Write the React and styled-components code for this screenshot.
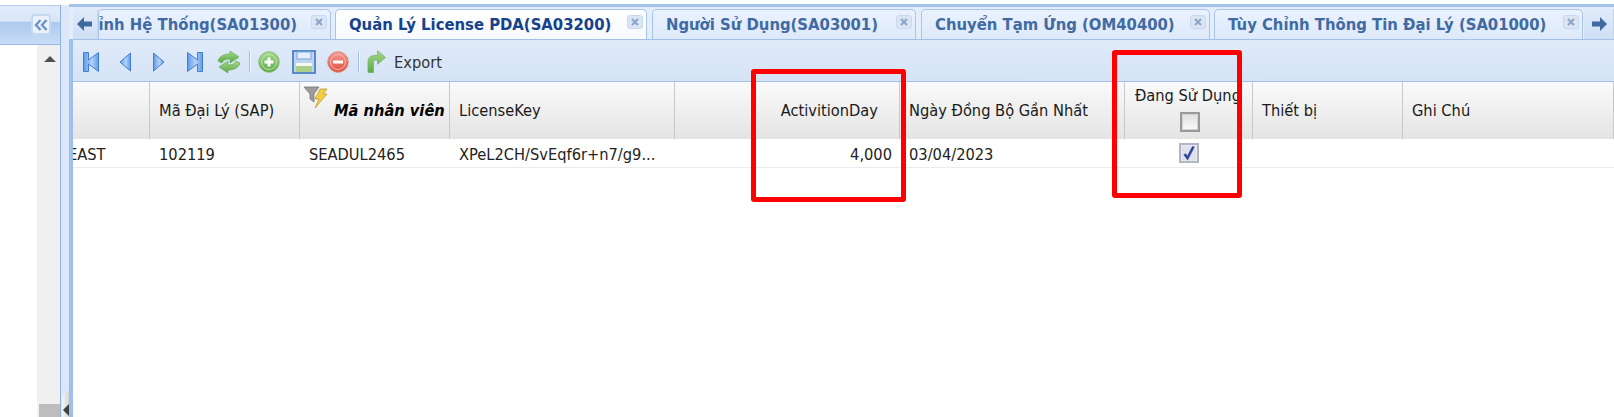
import React from "react";
import styled, { createGlobalStyle } from "styled-components";

const GlobalStyle = createGlobalStyle`
  html, body {
    margin: 0;
    padding: 0;
    background: #fff;
  }
  body {
    font-family: "DejaVu Sans Condensed", "DejaVu Sans", sans-serif;
    overflow: hidden;
  }
`;

const Page = styled.div`
  position: relative;
  display: flex;
  width: 1614px;
  height: 417px;
  overflow: hidden;
  background: #fff;
`;

const LeftPanel = styled.div`
  display: flex;
  flex-direction: column;
  width: 60px;
  padding-top: 5px;
`;

const LeftHeader = styled.div`
  display: flex;
  justify-content: flex-end;
  align-items: flex-start;
  height: 40px;
  padding: 8px 9px 0 0;
  box-sizing: border-box;
  background: linear-gradient(#e1ebfa, #d9e6f8 40%, #adc9ef 43%, #c9dcf5);
  border-top: 1px solid #b4cdee;
  border-bottom: 1px solid #99bbe8;
`;

const CollapseButton = styled.div`
  display: flex;
  align-items: center;
  justify-content: center;
  width: 20px;
  height: 21px;
  box-sizing: border-box;
  border: 2px solid #c6d9f3;
  border-radius: 4px;
  background: #eaf3fd;
  color: #6b93c9;
`;

const LeftBody = styled.div`
  flex: 1;
  display: flex;
  justify-content: flex-end;
`;

const ScrollTrack = styled.div`
  display: flex;
  flex-direction: column;
  justify-content: space-between;
  align-items: center;
  width: 23px;
  background: #f0f0f0;
  padding-top: 11px;
`;

const ScrollUp = styled.div`
  width: 0;
  height: 0;
  margin-left: 2px;
  border-left: 6px solid transparent;
  border-right: 6px solid transparent;
  border-bottom: 6px solid #505050;
`;

const ScrollThumb = styled.div`
  align-self: flex-end;
  width: 21px;
  height: 13px;
  background: #bdbdbd;
`;

const Splitter = styled.div`
  position: relative;
  width: 9px;
  margin-top: 5px;
  background: #dce8fa;
  border-left: 1px solid #8fb2e4;
  box-sizing: border-box;
`;

const SplitterGrip = styled.div`
  position: absolute;
  left: 1px;
  bottom: 0;
  width: 7px;
  height: 26px;
  background: linear-gradient(90deg, #f4f4f4, #d6d6d6);
  clip-path: polygon(0 5px, 100% 0, 100% 100%, 0 100%);
`;

const SplitterArrow = styled.div`
  position: absolute;
  right: 0;
  bottom: 1px;
  width: 0;
  height: 0;
  border-top: 6px solid transparent;
  border-bottom: 6px solid transparent;
  border-right: 6px solid #404040;
`;

const MainPanel = styled.div`
  flex: 1;
  min-width: 0;
  display: flex;
  flex-direction: column;
  margin-top: 4px;
  background: #fff;
  border-left: 4px solid #9dbfeb;
`;

const TabBar = styled.div`
  display: flex;
  align-items: flex-end;
  height: 36px;
  border-top: 3px solid #a4c3ea;
  margin-left: -4px;
  padding-left: 4px;
  box-sizing: border-box;
  background: #e4eefb;
  border-bottom: 1px solid #a3c0e8;
`;

const TabScroller = styled.div`
  flex: none;
  display: flex;
  align-items: center;
  justify-content: center;
  align-self: stretch;
  width: ${(p) => p.$w}px;
  margin-top: 2px;
  background: linear-gradient(#e0ebfa, #cfdff5);
  border-right: 1px solid #c3d6f1;
  color: #3f6a9f;
  box-sizing: border-box;
`;

const TabItem = styled.div`
  flex: none;
  position: relative;
  display: flex;
  justify-content: ${(p) => (p.$clip ? "flex-end" : "flex-start")};
  align-items: center;
  width: ${(p) => p.$w}px;
  height: 30px;
  margin-right: ${(p) => p.$gap}px;
  padding: 0 ${(p) => (p.$clip ? 33 : 0)}px 0 ${(p) => (p.$clip ? 0 : p.$pad)}px;
  box-sizing: border-box;
  overflow: hidden;
  white-space: nowrap;
  font-size: 16.5px;
  font-weight: 700;
  color: ${(p) => (p.$active ? "#15428b" : "#416aa3")};
  background: ${(p) => (p.$active ? "linear-gradient(#fff, #f6f9fe)" : "linear-gradient(#eaf2fd, #dde9fa)")};
  border: 1px solid #a9c4ea;
  border-bottom: none;
  border-radius: 5px 5px 0 0;
`;

const TabClose = styled.div`
  position: absolute;
  top: 5px;
  right: 3px;
  display: flex;
  align-items: center;
  justify-content: center;
  width: 16px;
  height: 14px;
  border-radius: 3px;
  background: #dbe6f5;
  border: 1px solid #c8d8ee;
  box-sizing: border-box;
  color: #8ea6c7;
`;

const Toolbar = styled.div`
  display: flex;
  align-items: center;
  height: 42px;
  padding: 2px 0 0 10px;
  background: linear-gradient(#e0ebfa, #d5e3f5);
  border-bottom: 1px solid #a3c0e8;
  box-sizing: border-box;
`;

const ToolIcon = styled.div`
  flex: none;
  display: flex;
  align-items: center;
  justify-content: center;
  width: ${(p) => p.$w}px;
  height: 26px;
  margin-right: ${(p) => p.$mr}px;
`;

const ToolSep = styled.div`
  flex: none;
  width: 1px;
  height: 21px;
  margin-right: ${(p) => p.$mr}px;
  background: #f2f8ff;
  border-left: 1px solid #9fc0ea;
`;

const ExportLabel = styled.span`
  font-size: 16.3px;
  margin-top: 2px;
  color: #333;
`;

const Grid = styled.div`
  display: grid;
  grid-template-columns: 77px 150px 150px 225px 225px 225px 128px 150px 211px;
`;

const HeadCell = styled.div`
  position: relative;
  display: flex;
  align-items: center;
  justify-content: ${(p) => (p.$right ? "flex-end" : "flex-start")};
  height: 57px;
  padding: ${(p) => (p.$right ? "0 21px 0 0" : `0 0 0 ${p.$pad ?? 9}px`)};
  box-sizing: border-box;
  overflow: hidden;
  white-space: nowrap;
  font-size: 16.3px;
  font-weight: ${(p) => (p.$sorted ? 700 : 400)};
  font-style: ${(p) => (p.$sorted ? "italic" : "normal")};
  color: ${(p) => (p.$sorted ? "#000" : "#1a1a1a")};
  background: linear-gradient(#fafafa, #e4e4e4);
  border-right: 1px solid #c8c8c8;
`;

const StackedHeadCell = styled(HeadCell)`
  flex-direction: column;
  align-items: flex-start;
  justify-content: flex-start;
  padding: 5px 0 0 10px;
`;

const HeadLabel = styled.span`
  line-height: 18px;
`;

const DataCell = styled.div`
  display: flex;
  align-items: center;
  justify-content: ${(p) => (p.$right ? "flex-end" : p.$center ? "center" : "flex-start")};
  height: 29px;
  padding: ${(p) => (p.$right ? "2px 8px 0 0" : `${p.$center ? 0 : 2}px 0 0 ${p.$pad ?? 9}px`)};
  box-sizing: border-box;
  overflow: hidden;
  white-space: nowrap;
  font-size: 16.3px;
  color: #222;
  border-bottom: 1px solid #ececec;
`;

const ClippedText = styled.span`
  margin-left: -5px;
`;

const CheckBox = styled.div`
  flex: none;
  display: flex;
  align-items: center;
  justify-content: center;
  width: 20px;
  height: 20px;
  margin-top: ${(p) => p.$top || 0}px;
  margin-left: ${(p) => p.$left || 0}px;
  box-sizing: border-box;
  border: 2px solid ${(p) => (p.$checked ? "#b1b6c2" : "#999")};
  background: ${(p) => (p.$checked ? "#dde2ec" : "linear-gradient(#dedede, #fafafa)")};
  box-shadow: inset 0 0 0 1px ${(p) => (p.$checked ? "#e8ebf2" : "#d2d2d2")};
`;

const RedBox = styled.div`
  position: absolute;
  left: ${(p) => p.$x}px;
  top: ${(p) => p.$y}px;
  width: ${(p) => p.$w}px;
  height: ${(p) => p.$h}px;
  box-sizing: border-box;
  border: 5px solid #fe0000;
  border-radius: 3px;
`;

const FilterIcon = styled.svg`
  position: absolute;
  left: 3px;
  top: 4px;
`;

const ChevronsLeft = () => (
  <svg width="14" height="12" viewBox="0 0 14 12" fill="none" stroke="currentColor" strokeWidth="2.4">
    <path d="M6.500 1 2 6l4.500 5M12.500 1 8 6l4.500 5" />
  </svg>
);

const ArrowIcon = ({ right }) => (
  <svg width="16" height="14" viewBox="0 0 16 14" fill="currentColor">
    <path d={right ? "M9 0l7 7-7 7V9.500H1v-5h8z" : "M7 0 0 7l7 7V9.500h8v-5H7z"} />
  </svg>
);

const CloseGlyph = () => (
  <svg width="8" height="8" viewBox="0 0 8 8" stroke="currentColor" strokeWidth="2.200">
    <path d="M1 1l6 6M7 1 1 7" />
  </svg>
);

const Defs = () => (
  <svg width="0" height="0" style={{ position: "absolute" }}>
    <defs>
      <linearGradient id="navBlue" x1="0" y1="0" x2="1" y2="0">
        <stop offset="0" stopColor="#5f9ae6" />
        <stop offset="0.55" stopColor="#b4d3f7" />
        <stop offset="1" stopColor="#5f9ae6" />
      </linearGradient>
      <linearGradient id="green" x1="0" y1="0" x2="0" y2="1">
        <stop offset="0" stopColor="#a8d88a" />
        <stop offset="1" stopColor="#5aa748" />
      </linearGradient>
      <linearGradient id="red" x1="0" y1="0" x2="0" y2="1">
        <stop offset="0" stopColor="#f59a90" />
        <stop offset="1" stopColor="#dc4f42" />
      </linearGradient>
    </defs>
  </svg>
);

const NavIcon = ({ kind }) => {
  const shapes = {
    first: { w: 16, d: "M.5 .5h5v7.500L15.500 .5v19L5.500 12v7.500h-5z" },
    prev: { w: 12, d: "M11.500 1v18L1 10z" },
    next: { w: 12, d: "M.5 1v18L11 10z" },
    last: { w: 16, d: "M15.500 .5h-5v7.500L.5 .5v19l10-7.500v7.500h5z" },
  };
  const s = shapes[kind];
  return (
    <svg width={s.w} height="20" viewBox={`0 0 ${s.w} 20`}>
      <path d={s.d} fill="url(#navBlue)" stroke="#3f7ed4" strokeWidth="1" />
    </svg>
  );
};

const RefreshIcon = () => (
  <svg width="24" height="22" viewBox="0 0 24 22">
    <path d="M1 10C2.500 5 7 3 13 3V0l9 6-9 6V8C9 8 6 9 5 12z" fill="url(#green)" stroke="#64ad52" strokeWidth="0.7" />
    <path d="M23 12c-1.500 5-6 7-12 7v3l-9-6 9-6v4c4 0 7-1 8-4z" fill="url(#green)" stroke="#64ad52" strokeWidth="0.7" />
  </svg>
);

const AddIcon = () => (
  <svg width="22" height="22" viewBox="0 0 22 22">
    <circle cx="11" cy="11" r="10.300" fill="url(#green)" stroke="#8cc079" />
    <circle cx="11" cy="11" r="7.500" fill="none" stroke="#c4e6b2" strokeWidth="1" />
    <path d="M11 6.500v9M6.500 11h9" stroke="#fff" strokeWidth="3" />
  </svg>
);

const SaveIcon = () => (
  <svg width="24" height="24" viewBox="0 0 24 24">
    <rect x="1" y="1" width="22" height="22" fill="#bcd3f1" stroke="#3f74bd" strokeWidth="1.600" />
    <rect x="5" y="2" width="14" height="7" fill="#e4eefb" stroke="#7fa5d9" />
    <rect x="4" y="13" width="16" height="9" fill="#f4f8ee" />
    <rect x="4" y="16" width="16" height="6" fill="#a9cf8b" />
  </svg>
);

const RemoveIcon = () => (
  <svg width="22" height="22" viewBox="0 0 22 22">
    <circle cx="11" cy="11" r="10.300" fill="url(#red)" stroke="#e08a80" />
    <circle cx="11" cy="11" r="7.500" fill="none" stroke="#fbb9b2" strokeWidth="1" />
    <path d="M6 11h10" stroke="#fff" strokeWidth="3" />
  </svg>
);

const ExportIcon = () => (
  <svg width="19" height="23" viewBox="0 0 19 23">
    <path d="M1 22.500V12C1 7.500 4 5.500 8 5.500h2.500V.8L18.500 7.500l-8 6.700V10H9c-2 0-2.500 1-2.500 3v9.500z" fill="url(#green)" stroke="#74b65e" strokeWidth="0.8" />
  </svg>
);

const FilterBolt = () => (
  <FilterIcon width="26" height="26" viewBox="0 0 26 26">
    <path d="M1 1h15l-5 7v8l-4-3V8z" fill="#9c9c9c" stroke="#6f6f6f" strokeWidth="0.7" />
    <path d="M17 3h7l-4 5h4L12 22l4-9h-4z" fill="#f2cd45" stroke="#b79320" strokeWidth="0.7" />
  </FilterIcon>
);

const CheckMark = () => (
  <svg width="14" height="16" viewBox="0 0 14 16" fill="none" stroke="#33489c" strokeWidth="2.600">
    <path d="M2.500 9l3 4L11.500 1.500" />
  </svg>
);

const tabs = [
  { id: "sys", label: "Tùy Chỉnh Hệ Thống(SA01300)", w: 233, gap: 4, clip: true },
  { id: "pda", label: "Quản Lý License PDA(SA03200)", w: 312, gap: 5, pad: 13, active: true },
  { id: "usr", label: "Người Sử Dụng(SA03001)", w: 264, gap: 5, pad: 13 },
  { id: "om", label: "Chuyển Tạm Ứng (OM40400)", w: 289, gap: 4, pad: 13 },
  { id: "agt", label: "Tùy Chỉnh Thông Tin Đại Lý (SA01000)", w: 369, gap: 1, pad: 13 },
];

export default function App() {
  return (
    <Page>
      <GlobalStyle />
      <Defs />
      <LeftPanel>
        <LeftHeader>
          <CollapseButton>
            <ChevronsLeft />
          </CollapseButton>
        </LeftHeader>
        <LeftBody>
          <ScrollTrack>
            <ScrollUp />
            <ScrollThumb />
          </ScrollTrack>
        </LeftBody>
      </LeftPanel>
      <Splitter>
        <SplitterGrip />
        <SplitterArrow />
      </Splitter>
      <MainPanel>
        <TabBar>
          <TabScroller $w={25}>
            <ArrowIcon />
          </TabScroller>
          {tabs.map((t) => (
            <TabItem key={t.id} $w={t.w} $gap={t.gap} $pad={t.pad} $clip={t.clip} $active={t.active}>
              {t.label}
              <TabClose>
                <CloseGlyph />
              </TabClose>
            </TabItem>
          ))}
          <TabScroller $w={30}>
            <ArrowIcon right />
          </TabScroller>
        </TabBar>
        <Toolbar>
          <ToolIcon $w={16} $mr={20}><NavIcon kind="first" /></ToolIcon>
          <ToolIcon $w={12} $mr={22}><NavIcon kind="prev" /></ToolIcon>
          <ToolIcon $w={12} $mr={22}><NavIcon kind="next" /></ToolIcon>
          <ToolIcon $w={16} $mr={14}><NavIcon kind="last" /></ToolIcon>
          <ToolIcon $w={24} $mr={8}><RefreshIcon /></ToolIcon>
          <ToolSep $mr={7} />
          <ToolIcon $w={22} $mr={12}><AddIcon /></ToolIcon>
          <ToolIcon $w={24} $mr={11}><SaveIcon /></ToolIcon>
          <ToolIcon $w={22} $mr={9}><RemoveIcon /></ToolIcon>
          <ToolSep $mr={7} />
          <ToolIcon $w={19} $mr={8}><ExportIcon /></ToolIcon>
          <ExportLabel>Export</ExportLabel>
        </Toolbar>
        <Grid>
          <HeadCell />
          <HeadCell>Mã Đại Lý (SAP)</HeadCell>
          <HeadCell $sorted $pad={34}>
            <FilterBolt />
            Mã nhân viên
          </HeadCell>
          <HeadCell>LicenseKey</HeadCell>
          <HeadCell $right>ActivitionDay</HeadCell>
          <HeadCell>Ngày Đồng Bộ Gần Nhất</HeadCell>
          <StackedHeadCell>
            <HeadLabel>Đang Sử Dụng</HeadLabel>
            <CheckBox $top={7} $left={45} />
          </StackedHeadCell>
          <HeadCell>Thiết bị</HeadCell>
          <HeadCell>Ghi Chú</HeadCell>

          <DataCell $pad={0}><ClippedText>EAST</ClippedText></DataCell>
          <DataCell>102119</DataCell>
          <DataCell>SEADUL2465</DataCell>
          <DataCell>XPeL2CH/SvEqf6r+n7/g9...</DataCell>
          <DataCell $right>4,000</DataCell>
          <DataCell>03/04/2023</DataCell>
          <DataCell $center $pad={0}>
            <CheckBox $checked>
              <CheckMark />
            </CheckBox>
          </DataCell>
          <DataCell />
          <DataCell />
        </Grid>
      </MainPanel>
      <RedBox $x={751} $y={69} $w={155} $h={133} />
      <RedBox $x={1112} $y={50} $w={130} $h={148} />
    </Page>
  );
}
